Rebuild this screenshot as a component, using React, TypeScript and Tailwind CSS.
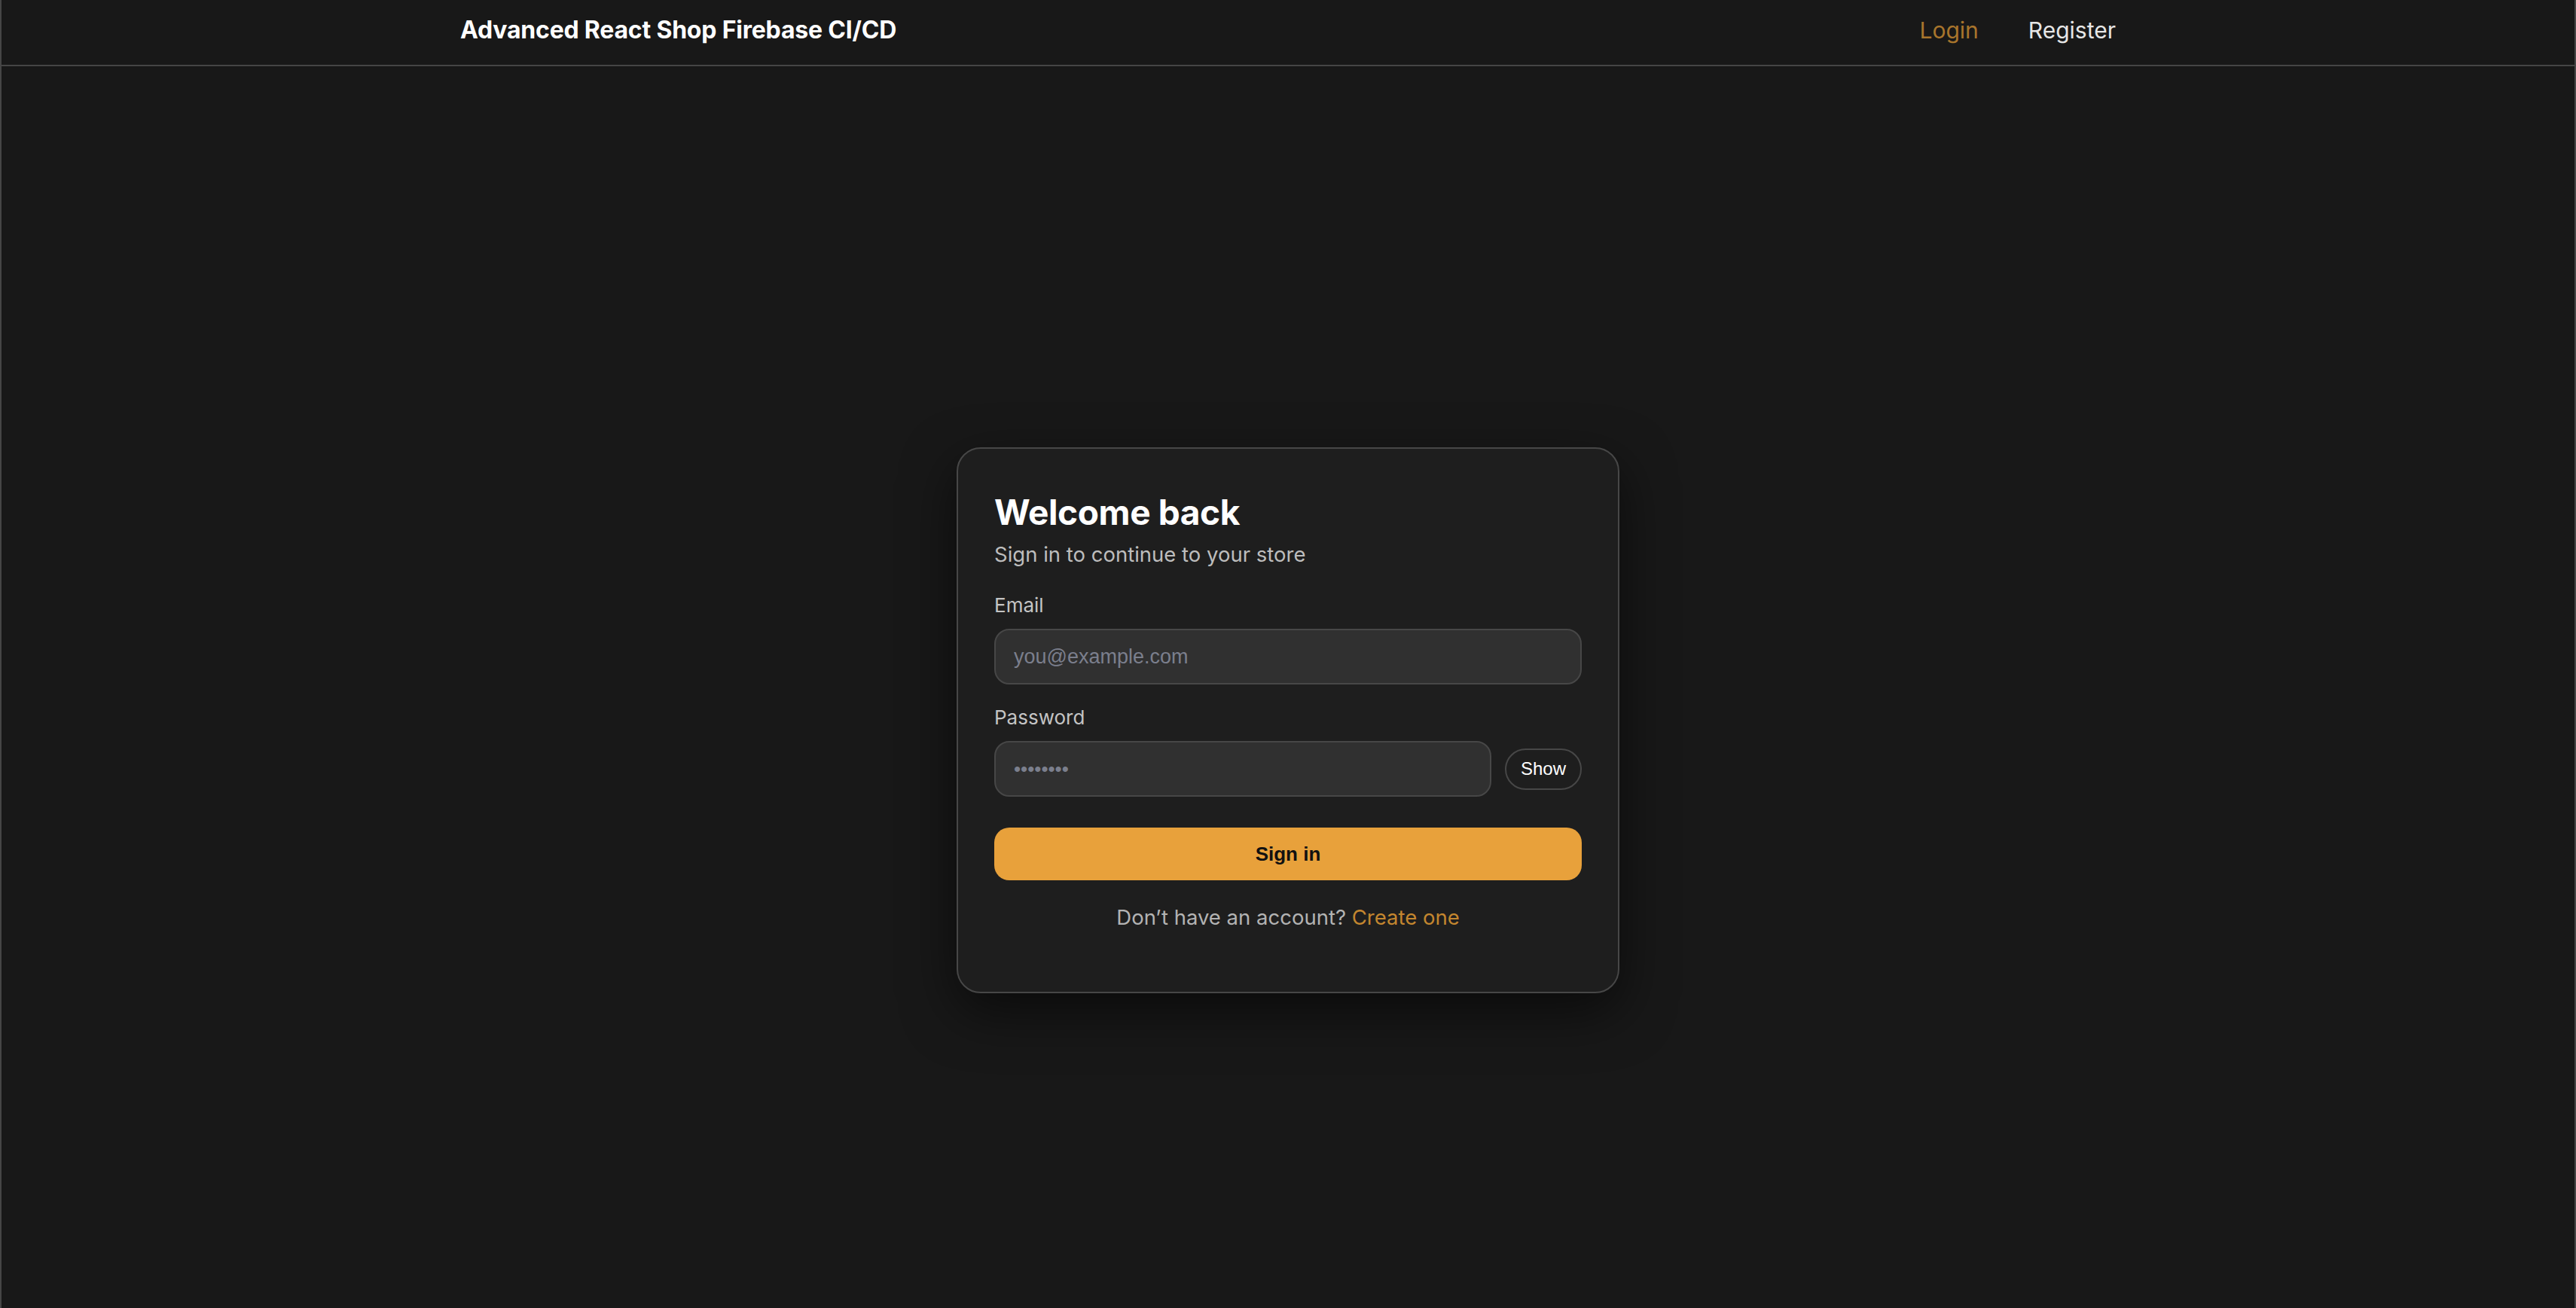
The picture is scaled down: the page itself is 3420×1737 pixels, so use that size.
import React, { useState } from 'react';

export default function App() {
  const [email, setEmail] = useState('');
  const [password, setPassword] = useState('password');
  const [show, setShow] = useState(false);

  return (
    <div className="h-[1737px] overflow-hidden bg-[#181818] border-x-2 border-[#454545] font-['Inter','Noto_Sans',sans-serif]">
      {/* top bar */}
      <header className="border-b-2 border-[#454545]">
        <div className="w-[2198px] mx-auto h-[86px] pb-[6px] flex items-center justify-between">
          <a href="#" className="text-[32px] font-bold text-white tracking-[-0.2px]">
            Advanced React Shop Firebase CI/CD
          </a>
          <nav className="flex items-center gap-[66px] text-[30px]">
            <a href="#" className="text-[#a8752c]">Login</a>
            <a href="#" className="text-[#e6e6e6]">Register</a>
          </nav>
        </div>
      </header>

      <main className="flex justify-center pt-[506px]">
        <div className="w-[880px] rounded-[32px] border-2 border-[#474747] bg-[#1e1e1e] px-[48px] pt-[48px] pb-[79px] shadow-[0_24px_70px_rgba(0,0,0,0.55)]">
          <h1 className="mt-[8px] text-[46px] leading-[56px] font-bold text-white tracking-[-0.4px]">Welcome back</h1>
          <p className="mt-[8px] text-[27.5px] leading-[40px] text-[#bdbdbd]">Sign in to continue to your store</p>

          <label className="block mt-[30px] text-[26px] leading-[36px] text-[#c4c4c4]">Email</label>
          <input
            type="email"
            value={email}
            onChange={(e) => setEmail(e.target.value)}
            placeholder="you@example.com"
            className="mt-[13px] w-full h-[74px] rounded-[20px] border-2 border-[#474747] bg-[#303030] px-[24px] text-[27px] text-white font-['Liberation_Sans',Arial,sans-serif] placeholder:text-[#7b7f8d] outline-none"
          />

          <label className="block mt-[26px] text-[26px] leading-[36px] text-[#c4c4c4]">Password</label>
          <div className="mt-[13px] flex items-center gap-[18px]">
            <input
              type={show ? 'text' : 'password'}
              value={password}
              onChange={(e) => setPassword(e.target.value)}
              className="flex-1 h-[74px] rounded-[20px] border-2 border-[#474747] bg-[#303030] px-[24px] text-[26px] text-[#7b7f8d] font-['Liberation_Sans',Arial,sans-serif] outline-none"
            />
            <button
              onClick={() => setShow(!show)}
              className="h-[55px] w-[102px] rounded-full border-2 border-[#474747] bg-[#1e1e1e] text-[24px] text-white font-['Liberation_Sans',Arial,sans-serif]"
            >
              {show ? 'Hide' : 'Show'}
            </button>
          </div>

          <button className="mt-[41px] w-full h-[70px] rounded-[20px] bg-[#e8a13b] text-[26px] font-bold text-[#111] font-['Liberation_Sans',Arial,sans-serif]">
            Sign in
          </button>

          <p className="mt-[29px] text-center text-[27.5px] leading-[40px] text-[#b3b3b3]">
            Don’t have an account? <a href="#" className="text-[#c3862f]">Create one</a>
          </p>
        </div>
      </main>
    </div>
  );
}
